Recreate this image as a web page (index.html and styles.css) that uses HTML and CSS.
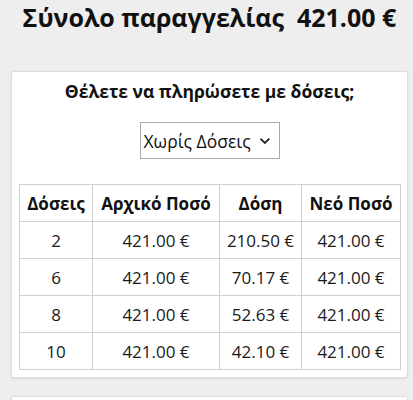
FILE: index.html
```html
<!DOCTYPE html>
<html lang="el">
<head>
<meta charset="utf-8">
<link rel="stylesheet" href="styles.css">
</head>
<body>
<div class="wrap">
  <h1 class="total">Σύνολο παραγγελίας&nbsp; 421.00 €</h1>
  <div class="card">
    <h2 class="question">Θέλετε να πληρώσετε με δόσεις;</h2>
    <div class="select-row">
      <div class="select">
        <span>Χωρίς Δόσεις</span>
        <svg class="chev" width="12" height="8" viewBox="0 0 12 8"><path d="M1.5 1.5 L6 6 L10.5 1.5" fill="none" stroke="#222" stroke-width="1.8"/></svg>
      </div>
    </div>
    <table class="plan">
      <colgroup><col class="c1"><col class="c2"><col class="c3"><col class="c4"></colgroup>
      <thead>
        <tr><th>Δόσεις</th><th>Αρχικό Ποσό</th><th>Δόση</th><th>Νεό Ποσό</th></tr>
      </thead>
      <tbody>
        <tr><td>2</td><td>421.00 €</td><td>210.50 €</td><td>421.00 €</td></tr>
        <tr><td>6</td><td>421.00 €</td><td>70.17 €</td><td>421.00 €</td></tr>
        <tr><td>8</td><td>421.00 €</td><td>52.63 €</td><td>421.00 €</td></tr>
        <tr><td>10</td><td>421.00 €</td><td>42.10 €</td><td>421.00 €</td></tr>
      </tbody>
    </table>
  </div>
  <div class="card card2"></div>
</div>
</body>
</html>
```
FILE: styles.css
```css
html, body {
  margin: 0;
  padding: 0;
  background: #eeeeee;
  overflow: hidden;
}
body {
  font-family: "Open Sans", "DejaVu Sans", sans-serif;
  color: #111;
}
.wrap {
  width: 397px;
  margin-left: 11px;
}
.total {
  margin: 0;
  padding-top: 1px;
  font-size: 25px;
  font-weight: 700;
  text-align: center;
  line-height: 33px;
  color: #111;
}
.card {
  margin-top: 37px;
  background: #fff;
  border: 1px solid #dcdcdc;
  border-radius: 2px;
  box-shadow: 0 1px 2px rgba(0,0,0,0.08);
  padding: 6px 7px 7px;
}
.question {
  margin: 0;
  font-size: 17.5px;
  font-weight: 700;
  text-align: center;
  line-height: 26px;
}
.select-row {
  display: flex;
  justify-content: center;
  margin-top: 18px;
}
.select {
  display: flex;
  align-items: center;
  gap: 8px;
  height: 37px;
  box-sizing: border-box;
  width: 140px;
  border: 1px solid #a9a9a9;
  padding: 0 8px 0 3px;
  font-size: 17.5px;
  color: #111;
}
.select span { flex: 1; white-space: nowrap; }
.chev { display: block; }
.plan {
  margin-top: 25px;
  width: 100%;
  border-collapse: collapse;
  table-layout: fixed;
  font-size: 17px;
}
.plan th, .plan td {
  border: 1px solid #cfcfcf;
  text-align: center;
  height: 36px;
  padding: 0;
  white-space: nowrap;
}
.plan td { color: #1a1a1a; }
.plan th { font-weight: 700; }
.c1 { width: 73px; }
.c2 { width: 127px; }
.c3 { width: 82px; }
.c4 { width: 99px; }
.card2 {
  margin-top: 18px;
  height: 40px;
  padding: 0;
}
```
